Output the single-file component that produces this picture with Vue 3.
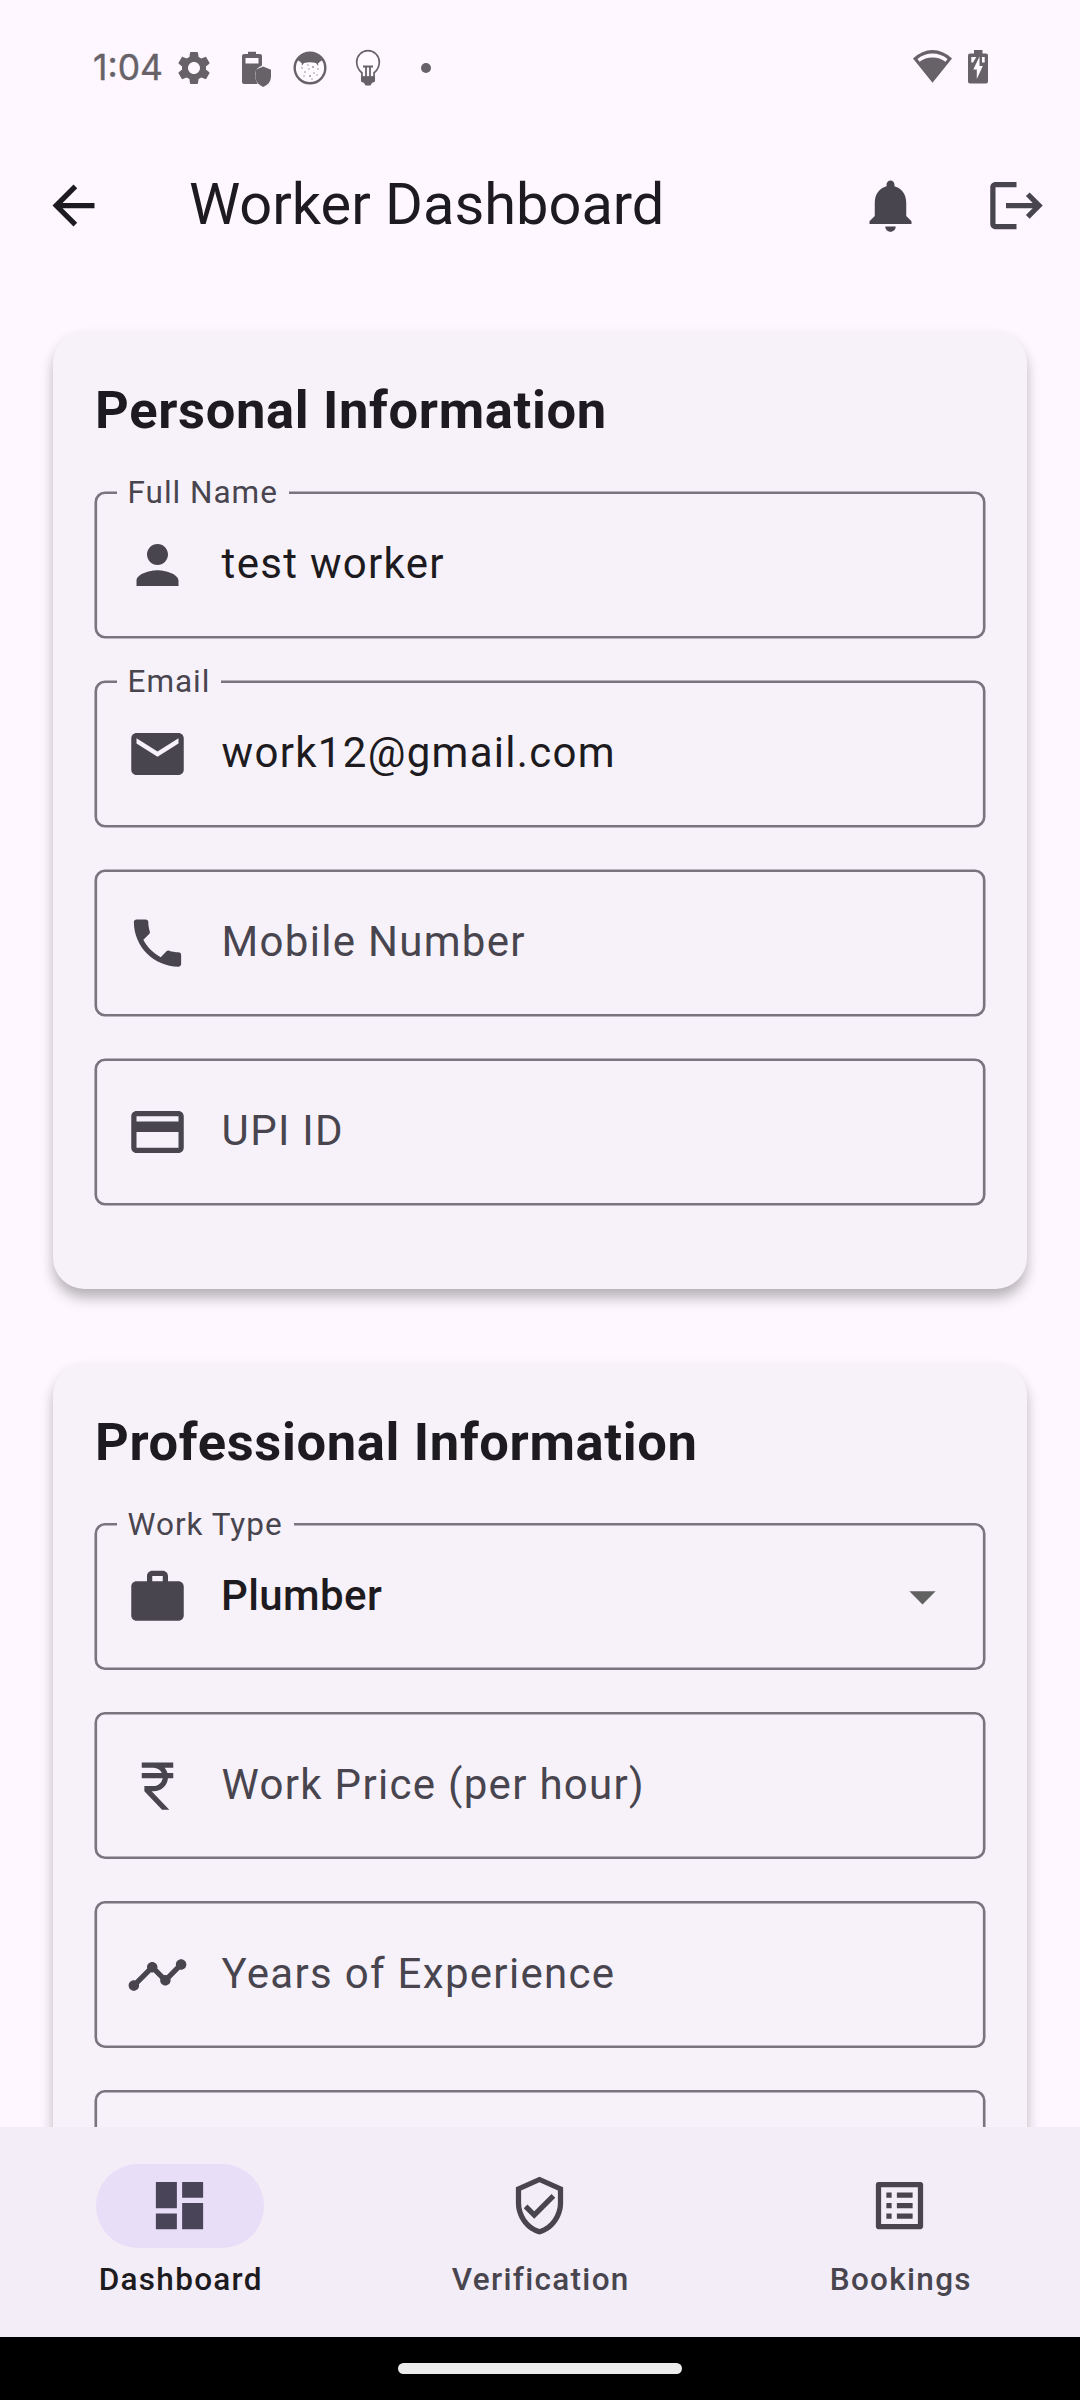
<script setup>
const icons = {
  back: 'M20 11H7.83l5.59-5.59L12 4l-8 8 8 8 1.41-1.41L7.83 13H20v-2z',
  bell: 'M12 22c1.1 0 2-.9 2-2h-4c0 1.1.89 2 2 2zm6-6v-5c0-3.07-1.64-5.64-4.5-6.32V4c0-.83-.67-1.5-1.5-1.5s-1.5.67-1.5 1.5v.68C7.63 5.36 6 7.92 6 11v5l-2 2v1h16v-1l-2-2z',
  logout: 'M17 7l-1.41 1.41L18.17 11H8v2h10.17l-2.58 2.58L17 17l5-5zM4 5h8V3H4c-1.1 0-2 .9-2 2v14c0 1.1.9 2 2 2h8v-2H4V5z',
  person: 'M12 12c2.21 0 4-1.79 4-4s-1.79-4-4-4-4 1.79-4 4 1.79 4 4 4zm0 2c-2.67 0-8 1.34-8 4v2h16v-2c0-2.66-5.33-4-8-4z',
  email: 'M20 4H4c-1.1 0-1.99.9-1.99 2L2 18c0 1.1.9 2 2 2h16c1.1 0 2-.9 2-2V6c0-1.1-.9-2-2-2zm0 4l-8 5-8-5V6l8 5 8-5v2z',
  phone: 'M6.62 10.79c1.44 2.83 3.76 5.14 6.59 6.59l2.2-2.2c.27-.27.67-.36 1.02-.24 1.12.37 2.33.57 3.57.57.55 0 1 .45 1 1V20c0 .55-.45 1-1 1-9.39 0-17-7.61-17-17 0-.55.45-1 1-1h3.5c.55 0 1 .45 1 1 0 1.25.2 2.45.57 3.57.11.35.03.74-.25 1.02l-2.2 2.2z',
  card: 'M20 4H4c-1.11 0-1.99.89-1.99 2L2 18c0 1.11.89 2 2 2h16c1.11 0 2-.89 2-2V6c0-1.11-.89-2-2-2zm0 14H4v-6h16v6zm0-10H4V6h16v2z',
  work: 'M20 6h-4V4c0-1.11-.89-2-2-2h-4c-1.11 0-2 .89-2 2v2H4c-1.11 0-1.99.89-1.99 2L2 19c0 1.11.89 2 2 2h16c1.11 0 2-.89 2-2V8c0-1.11-.89-2-2-2zm-6 0h-4V4h4v2z',
  rupee: 'M13.66 7c-.56-1.18-1.76-2-3.16-2H6V3h12v2h-3.26c.48.58.84 1.26 1.05 2H18v2h-2.02c-.25 2.8-2.61 5-5.48 5h-.73l6.73 7h-2.77L7 14v-2h3.5c1.76 0 3.22-1.3 3.46-3H6V7h7.66z',
  timeline: 'M23 8c0 1.1-.9 2-2 2-.18 0-.35-.02-.51-.07l-3.56 3.55c.05.16.07.34.07.52 0 1.1-.9 2-2 2s-2-.9-2-2c0-.18.02-.36.07-.52l-2.55-2.55c-.16.05-.34.07-.52.07s-.36-.02-.52-.07l-4.55 4.56c.05.16.07.33.07.51 0 1.1-.9 2-2 2s-2-.9-2-2 .9-2 2-2c.18 0 .35.02.51.07l4.56-4.55C8.02 9.36 8 9.18 8 9c0-1.1.9-2 2-2s2 .9 2 2c0 .18-.02.36-.07.52l2.55 2.55c.16-.05.34-.07.52-.07s.36.02.52.07l3.55-3.56C19.02 8.35 19 8.18 19 8c0-1.1.9-2 2-2s2 .9 2 2z',
  dashboard: 'M3 13h8V3H3v10zm0 8h8v-6H3v6zm10 0h8V11h-8v10zm0-18v6h8V3h-8z',
  verified: 'M12 1L3 5v6c0 5.55 3.84 10.74 9 12 5.16-1.26 9-6.45 9-12V5l-9-4zm7 10c0 4.52-2.98 8.69-7 9.93-4.02-1.24-7-5.41-7-9.93V6.3l7-3.11 7 3.11V11zm-11.59.59L6 13l4 4 8-8-1.41-1.42L10 14.17z',
  list: 'M19 5v14H5V5h14m1.1-2H3.9c-.5 0-.9.4-.9.9v16.2c0 .4.4.9.9.9h16.2c.4 0 .9-.5.9-.9V3.9c0-.5-.5-.9-.9-.9zM11 7h6v2h-6V7zm0 4h6v2h-6v-2zm0 4h6v2h-6zM7 7h2v2H7zm0 4h2v2H7zm0 4h2v2H7z',
  settings: 'M19.14,12.94c0.04-0.3,0.06-0.61,0.06-0.94c0-0.32-0.02-0.64-0.07-0.94l2.03-1.58c0.18-0.14,0.23-0.41,0.12-0.61l-1.92-3.32c-0.12-0.22-0.37-0.29-0.59-0.22l-2.39,0.96c-0.5-0.38-1.03-0.7-1.62-0.94L14.4,2.81c-0.04-0.24-0.24-0.41-0.48-0.41h-3.84c-0.24,0-0.43,0.17-0.47,0.41L9.25,5.35C8.66,5.59,8.12,5.92,7.63,6.29L5.24,5.33c-0.22-0.08-0.47,0-0.59,0.22L2.74,8.87C2.62,9.08,2.66,9.34,2.86,9.48l2.03,1.58C4.84,11.36,4.8,11.69,4.8,12s0.02,0.64,0.07,0.94l-2.03,1.58c-0.18,0.14-0.23,0.41-0.12,0.61l1.92,3.32c0.12,0.22,0.37,0.29,0.59,0.22l2.39-0.96c0.5,0.38,1.03,0.7,1.62,0.94l0.36,2.54c0.05,0.24,0.24,0.41,0.48,0.41h3.84c0.24,0,0.44-0.17,0.47-0.41l0.36-2.54c0.59-0.24,1.13-0.56,1.62-0.94l2.39,0.96c0.22,0.08,0.47,0,0.59-0.22l1.92-3.32c0.12-0.22,0.07-0.47-0.12-0.61L19.14,12.94z M12,15.6c-1.98,0-3.6-1.62-3.6-3.6s1.62-3.6,3.6-3.6s3.6,1.62,3.6,3.6S13.98,15.6,12,15.6z',
}

const sections = [
  {
    title: 'Personal Information',
    offset: 1.8,
    fields: [
      { icon: 'person', label: 'Full Name', value: 'test worker' },
      { icon: 'email', label: 'Email', value: 'work12@gmail.com' },
      { icon: 'phone', hint: 'Mobile Number' },
      { icon: 'card', hint: 'UPI ID' },
    ],
  },
  {
    title: 'Professional Information',
    offset: 1.3,
    fields: [
      { icon: 'work', label: 'Work Type', value: 'Plumber', select: true },
      { icon: 'rupee', hint: 'Work Price (per hour)' },
      { icon: 'timeline', hint: 'Years of Experience' },
      {},
    ],
  },
]

const tabs = [
  { icon: 'dashboard', label: 'Dashboard', active: true },
  { icon: 'verified', label: 'Verification' },
  { icon: 'list', label: 'Bookings' },
]
</script>

<template>
  <div class="screen">
    <div class="status">
      <span class="clock">1:04</span>
      <svg class="gear" width="40" height="40" viewBox="0 0 24 24"><path :d="icons.settings" /></svg>
      <svg class="guard" width="36" height="40" viewBox="238 48 36 40">
        <path fill-rule="evenodd" d="M248 54v-2.2h8V54h4q2 0 2 2v9.5q-7 3-7 8 0 6 2.500 10.500H244q-2 0-2-2V56q0-2 2-2zM245.500 58v5.500h13V58z" />
        <path d="M263.200 66.500l7.800 3.200v6.800q0 7-7.800 10.500-7.800-3.500-7.800-10.500v-6.800z" />
      </svg>
      <svg class="face" width="40" height="40" viewBox="290 48 40 40">
        <circle cx="310" cy="68" r="15.300" fill="#fefaff" stroke="#666268" stroke-width="2.400" />
        <path d="M297.500 60Q302 53.500 310 53.500T322.500 60q-3 1.500-4.500 3.500l.3 2.500-2.300-3q-6-1.500-12 0l-2.300 3 .3-2.500q-1.500-2-4.500-3.500z" />
        <g fill="#8b878e">
          <circle cx="302" cy="68" r=".8" /><circle cx="305" cy="72" r=".8" /><circle cx="309" cy="69" r=".7" />
          <circle cx="313" cy="67" r=".9" /><circle cx="318" cy="69" r=".8" /><circle cx="314" cy="73" r=".8" />
          <circle cx="310" cy="76" r=".9" /><circle cx="304" cy="76" r=".7" /><circle cx="317" cy="75" r=".7" />
          <circle cx="308" cy="65" r=".7" /><circle cx="312" cy="79" r=".7" />
        </g>
      </svg>
      <svg class="bulb" width="32" height="40" viewBox="352 48 32 40">
        <path fill="#fefaff" stroke="#666268" stroke-width="1.700" d="M362 77v-4q-5.300-4.500-5.300-11a11.300 11.300 0 0 1 22.600 0q0 6.500-5.300 11v4z" />
        <path fill="none" stroke="#666268" stroke-width="1.800" d="M363 66.500h10M366 67v10M370 67v10" />
        <path d="M361 76.500h14v5l-3 1.500-1.500 2.500h-5L364 83l-3-1.500z" />
      </svg>
      <i class="dot"></i>
      <span class="grow"></span>
      <svg class="wifi" width="42" height="40" viewBox="912 48 42 40">
        <path fill-rule="evenodd" d="M913 58.500Q922 50 932.500 50T952 58.500L932.500 82.700zM917.500 59l2 2.700q5.500-4.300 13-4.300t13 4.300l2-2.700q-6.500-5.500-15-5.500t-15 5.500z" />
      </svg>
      <svg width="24" height="40" viewBox="966 48 24 40">
        <path d="M974 53.500V50h8.500v3.500h3.500q2 0 2 2V81.500q0 2-2 2h-16q-2 0-2-2V55.500q0-2 2-2z" />
        <path fill="#fefaff" d="M971.300 57h5l-3.300 5.500h-1.700zM982 57h2.700v5.500H982zM979.500 56.500V66h3.300L976.800 79v-9.500h-3.500z" />
      </svg>
    </div>

    <header class="appbar">
      <svg class="icon dark" viewBox="0 0 24 24"><path :d="icons.back" /></svg>
      <h1>Worker Dashboard</h1>
      <svg class="icon" viewBox="0 0 24 24"><path :d="icons.bell" /></svg>
      <svg class="icon" viewBox="0 0 24 24"><path :d="icons.logout" /></svg>
    </header>

    <main class="content">
      <section v-for="s in sections" :key="s.title" class="card">
        <h2>{{ s.title }}</h2>
        <div v-for="(f, i) in s.fields" :key="i" class="field">
          <svg class="outline" width="892" height="149">
            <rect x="0.8" :y="s.offset" width="888.400" height="144.400" rx="9.200" />
          </svg>
          <span v-if="f.label" class="label">{{ f.label }}</span>
          <svg v-if="f.icon" class="icon" viewBox="0 -0.2 24 24"><path :d="icons[f.icon]" /></svg>
          <span v-if="f.value" class="value" :class="{ medium: f.select }">{{ f.value }}</span>
          <span v-else class="value hint">{{ f.hint }}</span>
          <svg v-if="f.select" class="icon caret" viewBox="0 0 24 24"><path d="M7 10l5 5 5-5z" /></svg>
        </div>
      </section>
    </main>

    <nav class="tabs">
      <div v-for="t in tabs" :key="t.label" class="tab" :class="{ active: t.active }">
        <span class="pill"><svg class="icon" viewBox="0 0 24 24"><path :d="icons[t.icon]" /></svg></span>
        <span class="tab-label">{{ t.label }}</span>
      </div>
    </nav>
    <div class="gesture"><i></i></div>
  </div>
</template>

<style>
body { margin: 0; background: #fef7ff; }
</style>

<style scoped>
* { box-sizing: border-box; }
.screen {
  width: 1080px;
  height: 2400px;
  display: flex;
  flex-direction: column;
  overflow: hidden;
  background: #fef7ff;
  color: #1d1b20;
  font-family: Roboto, "Liberation Sans", sans-serif;
}
svg { display: block; flex: none; }
.icon { width: 63px; height: 63px; fill: #49454f; }
.icon.dark { fill: #1d1b20; }

.status {
  flex: none;
  height: 136px;
  display: flex;
  align-items: center;
  padding: 0 90px 0 93px;
  color: #666268;
  fill: #666268;
}
.clock { width: 81px; font: 400 35.5px/40px Inter, sans-serif; white-space: nowrap; -webkit-text-stroke: .4px #666268; }
.guard { margin-left: 24px; }
.face { margin-left: 16px; }
.bulb { margin-left: 22px; }
.dot { width: 10px; height: 10px; border-radius: 50%; background: #666268; margin-left: 37px; }
.grow { flex: 1; }
.wifi { margin-right: 12px; }

.appbar {
  flex: none;
  height: 139px;
  display: flex;
  align-items: center;
  padding: 0 32px 0 42px;
}
h1 { flex: 1; margin: 0 0 0 84px; padding-bottom: 3px; font-size: 57.75px; line-height: 74px; font-weight: 400; white-space: nowrap; }
.appbar .icon + .icon { margin-left: 63px; }

.content {
  flex: 1;
  min-height: 0;
  overflow: hidden;
  display: flex;
  flex-direction: column;
  gap: 74px;
  padding: 56px 53px 0;
}
.card {
  flex: none;
  padding: 41px 42px 42px;
  border-radius: 31.5px;
  background: #f7f2fa;
  box-shadow: 0 10px 14px -1px rgba(0, 0, 0, .25), 0 5px 14px rgba(0, 0, 0, .06);
}
h2 { margin: 0 0 43px; font-size: 52.5px; line-height: 76px; font-weight: 700; letter-spacing: .65px; white-space: nowrap; }
.field {
  position: relative;
  height: 147px;
  margin-bottom: 42px;
  display: flex;
  align-items: center;
  padding: 0 31px;
}
.outline { position: absolute; left: 0; top: 0; overflow: visible; }
.outline rect { fill: none; stroke: #79747e; stroke-width: 2.625; }
.label {
  position: absolute;
  left: 21.5px;
  top: -17px;
  padding: 0 11px;
  background: #f7f2fa;
  color: #49454f;
  font-size: 31.5px;
  line-height: 37px;
  letter-spacing: .98px;
}
.value { flex: 1; margin-left: 32.6px; padding-bottom: 3px; font-size: 42px; letter-spacing: 1.3px; white-space: nowrap; }
.hint { color: #49454f; }
.medium { margin-left: 32px; font-weight: 500; letter-spacing: .4px; }
.caret { fill: #616161; }

.tabs {
  flex: none;
  height: 210px;
  display: flex;
  background: #f3edf7;
}
.tab { flex: 1; display: flex; flex-direction: column; align-items: center; padding-top: 37px; color: #49454f; }
.pill { width: 168px; height: 84px; border-radius: 42px; display: flex; align-items: center; justify-content: center; padding: 0 1px 1px 0; }
.active .pill { background: #e8def8; }
.active .icon { fill: #4a4458; }
.active { color: #1d1b20; }
.tab-label { margin-top: 11px; padding-left: 1.5px; font-size: 31.5px; line-height: 42px; font-weight: 500; letter-spacing: 1.3px; }
.gesture { flex: none; height: 63px; background: #000; display: flex; justify-content: center; padding-top: 26px; }
.gesture i { width: 284px; height: 11px; border-radius: 5.5px; background: #ececec; }
</style>
